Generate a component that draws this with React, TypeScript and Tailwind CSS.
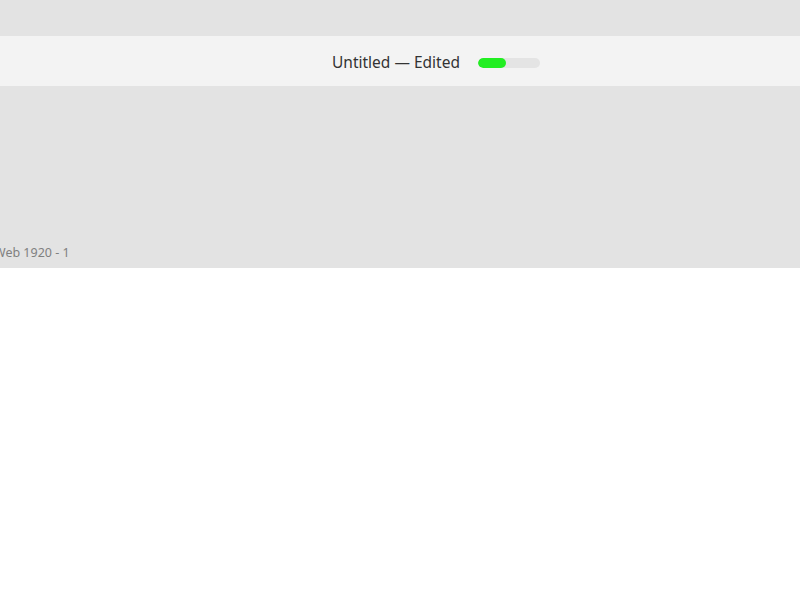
export default function App() {
  return (
    <div className="w-[800px] h-[600px] bg-white overflow-hidden" style={{ fontFamily: '"Noto Sans", "Open Sans", sans-serif' }}>
      <div className="h-[36px] bg-[#e3e3e3]" />
      <div className="h-[50px] bg-[#f3f3f3] flex items-center justify-center pt-[3px]">
        <div className="flex items-center ml-[72px]">
          <span className="text-[15.5px] text-[#333333] leading-none">Untitled — Edited</span>
          <div className="ml-[18px] w-[62px] h-[10px] rounded-full bg-[#e4e4e4] overflow-hidden">
            <div className="w-[28px] h-full rounded-full bg-[#22ee22]" />
          </div>
        </div>
      </div>
      <div className="h-[182px] bg-[#e3e3e3] flex flex-col justify-end pb-[9px]">
        <span className="ml-[-6px] text-[12.5px] text-[#808080] leading-none whitespace-nowrap">Web 1920 - 1</span>
      </div>
    </div>
  );
}
